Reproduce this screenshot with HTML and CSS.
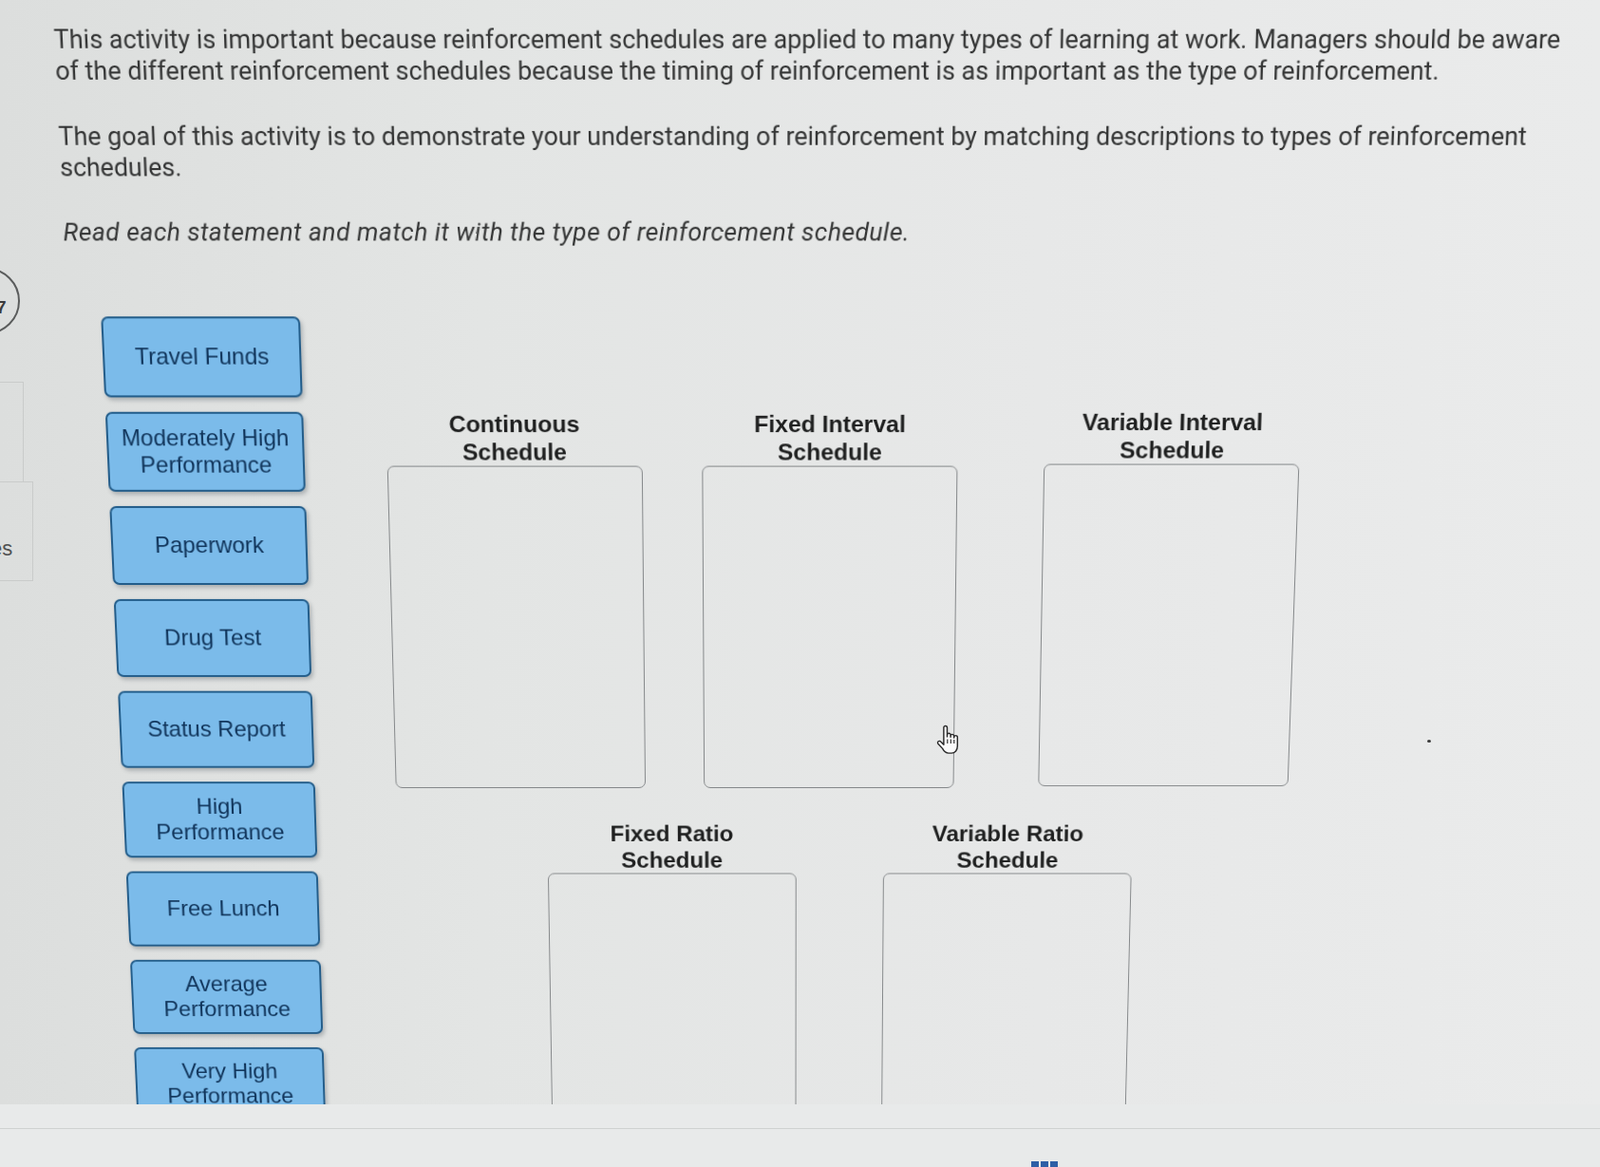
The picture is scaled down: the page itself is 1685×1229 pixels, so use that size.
FILE: index.html
```html
<!DOCTYPE html>
<html lang="en">
<head>
<meta charset="utf-8">
<title>Reinforcement Schedules Activity</title>
<link rel="stylesheet" href="styles.css">
</head>
<body>
<div class="screen">
  <aside class="side-peek">
    <div class="step-badge"></div>
    <span class="step-num">7</span>
    <div class="peek-card peek-card-a"></div>
    <div class="peek-card peek-card-b"></div>
    <span class="peek-label">es</span>
  </aside>

  <div class="viewport">
    <main class="stage">
      <section class="intro">
        <p>This activity is important because reinforcement schedules are applied to many types of learning at work. Managers should be aware of the different reinforcement schedules because the timing of reinforcement is as important as the type of reinforcement.</p>
        <p>The goal of this activity is to demonstrate your understanding of reinforcement by matching descriptions to types of reinforcement schedules.</p>
        <p class="instruction">Read each statement and match it with the type of reinforcement schedule.</p>
      </section>

      <section class="activity">
        <ul class="chips">
          <li class="chip">Travel Funds</li>
          <li class="chip">Moderately High Performance</li>
          <li class="chip">Paperwork</li>
          <li class="chip">Drug Test</li>
          <li class="chip">Status Report</li>
          <li class="chip">High Performance</li>
          <li class="chip">Free Lunch</li>
          <li class="chip">Average Performance</li>
          <li class="chip">Very High Performance</li>
        </ul>

        <div class="board">
          <div class="zone-row zone-row-top">
            <div class="zone">
              <h3 class="zone-label">Continuous<br>Schedule</h3>
              <div class="zone-box"></div>
            </div>
            <div class="zone zone-fi">
              <h3 class="zone-label">Fixed Interval<br>Schedule</h3>
              <div class="zone-box"></div>
            </div>
            <div class="zone zone-vi">
              <h3 class="zone-label">Variable Interval<br>Schedule</h3>
              <div class="zone-box"></div>
            </div>
          </div>
          <div class="zone-row zone-row-bottom">
            <div class="zone">
              <h3 class="zone-label">Fixed Ratio<br>Schedule</h3>
              <div class="zone-box"></div>
            </div>
            <div class="zone zone-vr">
              <h3 class="zone-label">Variable Ratio<br>Schedule</h3>
              <div class="zone-box"></div>
            </div>
          </div>
        </div>
      </section>
    </main>
  </div>

  <footer class="footer">
    <div class="footer-rule"></div>
    <div class="pager-icon"><span></span><span></span><span></span></div>
  </footer>

  <svg class="cursor" viewBox="0 0 24 32" aria-hidden="true">
    <path d="M8 15 V3.2 a1.75 1.75 0 0 1 3.5 0 V12.5 V10.8 a1.75 1.75 0 0 1 3.5 0 V12.8 V11.8 a1.75 1.75 0 0 1 3.5 0 V13.6 V13 a1.75 1.75 0 0 1 3.5 0 V22 c0 4 -2.4 7.2 -6 7.2 h-3.2 c-3 0 -4.6 -2 -6 -4.6 L2.2 19.6 a1.7 1.7 0 0 1 2.7 -2.1 L8 20.5 Z" fill="#fbfbfb" stroke="#2a2a2a" stroke-width="1.4" stroke-linejoin="round"/>
    <path d="M11.8 15 v4.5 M15.2 15 v4.5 M18.6 15.5 v4" stroke="#2a2a2a" stroke-width="1.1" fill="none"/>
  </svg>
  <span class="speck"></span>
</div>
</body>
</html>
```

FILE: styles.css
```css
* {
  box-sizing: border-box;
}

html,
body {
  margin: 0;
  padding: 0;
}

body {
  width: 1685px;
  height: 1229px;
  overflow: hidden;
  font-family: "Liberation Sans", Arial, sans-serif;
}

.screen {
  position: relative;
  width: 1685px;
  height: 1229px;
  overflow: hidden;
  display: flex;
  flex-direction: column;
  background: linear-gradient(90deg, #dcdedd 0%, #e3e5e4 30%, #e7e8e8 65%, #eaebeb 100%);
}

/* partially visible side navigation at the left edge */
.side-peek {
  position: absolute;
  left: 0;
  top: 0;
  width: 40px;
  height: 640px;
  pointer-events: none;
}

.step-badge {
  position: absolute;
  left: -49px;
  top: 282px;
  width: 70px;
  height: 70px;
  border: 2px solid #5a5c5c;
  border-radius: 50%;
}

.step-num {
  position: absolute;
  left: -4px;
  top: 313px;
  font-size: 19px;
  line-height: 22px;
  font-weight: 700;
  color: #3a3a3a;
}

.peek-card {
  position: absolute;
  left: -20px;
  border: 1px solid #c9cbca;
}

.peek-card-a {
  top: 402px;
  width: 45px;
  height: 106px;
}

.peek-card-b {
  top: 507px;
  width: 55px;
  height: 105px;
}

.peek-label {
  position: absolute;
  left: -10px;
  top: 567px;
  font-size: 22px;
  line-height: 22px;
  color: #505252;
}

/* main scrolling content (photographed at a slight angle) */
.viewport {
  flex: none;
  height: 1163px;
  overflow: hidden;
}

.stage {
  height: 1186px;
  overflow: hidden;
  padding: 44px 0 0 84px;
  transform-origin: 825px 615px;
  transform: perspective(1500px) rotateX(-5.5deg);
}

.intro {
  width: 1555px;
  font-family: Roboto, "Liberation Sans", sans-serif;
  font-size: 26px;
  line-height: 30.5px;
  color: #343535;
}

.intro p {
  margin: 0 0 35px;
}

.intro .instruction {
  margin: 0;
  font-style: italic;
  letter-spacing: 0.4px;
}

.activity {
  display: flex;
  align-items: flex-start;
  margin: 70px 0 0 35px;
}

.chips {
  flex: none;
  list-style: none;
  margin: 0;
  padding: 0;
  width: 206px;
  display: flex;
  flex-direction: column;
  gap: 15px;
}

.chip {
  height: 83px;
  padding: 0 10px;
  display: flex;
  align-items: center;
  justify-content: center;
  text-align: center;
  background: #7bbbea;
  border: 2px solid #235d8a;
  border-radius: 7px;
  box-shadow: 2px 3px 4px rgba(40, 50, 60, 0.28);
  color: #10345a;
  font-size: 24px;
  line-height: 28px;
}

.board {
  flex: none;
  margin: 96px 0 0 86px;
}

.zone-row {
  display: flex;
  align-items: flex-start;
}

.zone {
  flex: none;
  width: 267px;
}

.zone-fi {
  margin-left: 62px;
}

.zone-vi {
  margin-left: 90px;
  margin-top: -2px;
}

.zone-row-bottom {
  margin-top: 35px;
  padding-left: 161px;
}

.zone-vr {
  margin-left: 93px;
}

.zone-label {
  margin: 0;
  text-align: center;
  font-size: 24.5px;
  line-height: 29px;
  font-weight: 700;
  color: #1f2020;
}

.zone-box {
  height: 343px;
  border: 1.5px solid #85888a;
  border-radius: 7px;
}

/* bottom bar */
.footer {
  flex: 1;
  background: #e8eaea;
}

.footer-rule {
  margin-top: 25px;
  border-top: 1px solid #cfd2d1;
}

.pager-icon {
  display: flex;
  gap: 2px;
  margin: 34px 0 0 1086px;
}

.pager-icon span {
  width: 8px;
  height: 8px;
  background: #2e5fa6;
}

/* mouse pointer over the board */
.cursor {
  position: absolute;
  left: 985px;
  top: 763px;
  width: 26px;
  height: 33px;
}

.speck {
  position: absolute;
  left: 1503px;
  top: 779px;
  width: 4px;
  height: 3px;
  border-radius: 50%;
  background: #3a3a3a;
}
```
